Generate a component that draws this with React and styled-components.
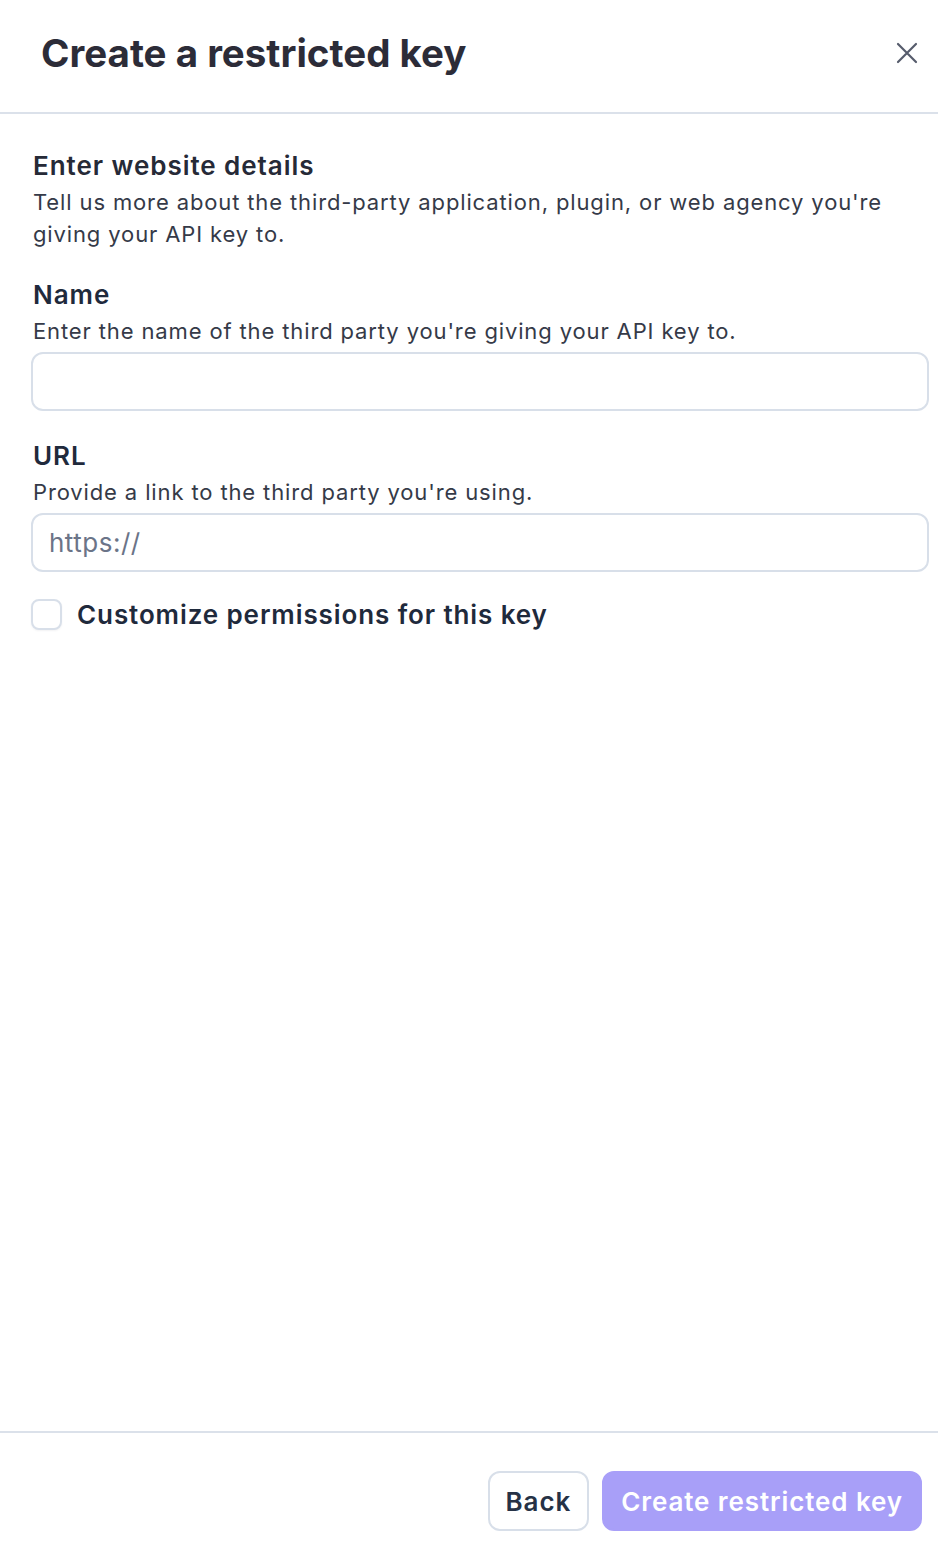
import React from "react";
import styled, { createGlobalStyle } from "styled-components";

const GlobalStyle = createGlobalStyle`
    html, body {
        margin: 0;
        padding: 0;
        background: #ffffff;
    }
    body {
        font-family: Inter, "Noto Sans", "Liberation Sans", sans-serif;
        -webkit-font-smoothing: antialiased;
    }
    * {
        box-sizing: border-box;
    }
`

const Page = styled.div`
    display: flex;
    flex-direction: column;
    width: 938px;
    height: 1552px;
    background: #ffffff;
`

const Header = styled.header`
    display: flex;
    align-items: center;
    justify-content: space-between;
    height: 114px;
    padding: 0 18px 6px 41px;
    border-bottom: 2px solid #dbe1ea;
`

const Title = styled.h1`
    margin: 0;
    font-size: 38.5px;
    font-weight: 700;
    color: #2c2c38;
`

const CloseButton = styled.button`
    display: flex;
    align-items: center;
    justify-content: center;
    width: 26px;
    height: 26px;
    padding: 0;
    border: none;
    background: none;
    color: #565c6c;
    cursor: pointer;
`

const Body = styled.main`
    flex: 1;
    display: flex;
    flex-direction: column;
    padding: 36px 9px 0 31px;
`

const Section = styled.div`
    display: flex;
    flex-direction: column;
    margin-bottom: ${(props) => props.gap || "0px"};
`

const SectionTitle = styled.h2`
    margin: 0 0 0 2px;
    font-size: 26px;
    line-height: 32px;
    font-weight: 600;
    letter-spacing: 0.95px;
    color: #262a37;
`

const Label = styled.label`
    margin: 0 0 0 2px;
    font-size: 26px;
    line-height: 32px;
    font-weight: 600;
    letter-spacing: 0.95px;
    color: #1f2a3c;
`

const Hint = styled.p`
    margin: 4px 0 0 2px;
    font-size: 22px;
    line-height: 32px;
    font-weight: 400;
    letter-spacing: 0.87px;
    color: #353a48;
`

const Input = styled.input`
    width: 100%;
    height: 59px;
    margin-top: 5px;
    padding: 0 16px;
    border: 2px solid #d8dfe9;
    border-radius: 12px;
    font-family: inherit;
    font-size: 26px;
    letter-spacing: 0.5px;
    color: #1f2a3c;
    outline: none;
    background: #ffffff;

    &::placeholder {
        color: #6b7488;
    }
`

const CheckRow = styled.label`
    display: flex;
    align-items: center;
    gap: 15px;
    cursor: pointer;
`

const Box = styled.span`
    width: 31px;
    height: 31px;
    border: 2px solid #d8dfe9;
    border-radius: 8px;
    background: #ffffff;
    box-shadow: 0 1px 2px rgba(30, 42, 60, 0.06);
`

const CheckText = styled.span`
    font-size: 26px;
    font-weight: 600;
    letter-spacing: 0.9px;
    color: #1f2a3c;
`

const Footer = styled.footer`
    display: flex;
    justify-content: flex-end;
    gap: 13px;
    padding: 38px 16px 21px;
    border-top: 2px solid #dbe1ea;
`

const Button = styled.button`
    height: 60px;
    padding: 0 ${(props) => (props.primary ? "17px" : "16px")};
    border-radius: 12px;
    font-family: inherit;
    font-size: 26px;
    font-weight: 600;
    letter-spacing: 0.9px;
    cursor: pointer;
    border: 2px solid ${(props) => (props.primary ? "#a89ff8" : "#d8dfe9")};
    background: ${(props) => (props.primary ? "#a89ff8" : "#ffffff")};
    color: ${(props) => (props.primary ? "#ffffff" : "#263246")};
`

const CloseIcon = () => (
    <svg width="24" height="24" viewBox="0 0 24 24" fill="none" stroke="currentColor" strokeWidth="2.2" strokeLinecap="round">
        <path d="M3 3L21 21M21 3L3 21" />
    </svg>
);

const App = () => {
    return (
        <Page>
            <GlobalStyle />
            <Header>
                <Title>Create a restricted key</Title>
                <CloseButton aria-label="Close">
                    <CloseIcon />
                </CloseButton>
            </Header>
            <Body>
                <Section gap="29px">
                    <SectionTitle>Enter website details</SectionTitle>
                    <Hint>Tell us more about the third-party application, plugin, or web agency you're giving your API key to.</Hint>
                </Section>
                <Section gap="29px">
                    <Label>Name</Label>
                    <Hint>Enter the name of the third party you're giving your API key to.</Hint>
                    <Input type="text" />
                </Section>
                <Section gap="27px">
                    <Label>URL</Label>
                    <Hint>Provide a link to the third party you're using.</Hint>
                    <Input type="text" placeholder="https://" />
                </Section>
                <CheckRow>
                    <Box />
                    <CheckText>Customize permissions for this key</CheckText>
                </CheckRow>
            </Body>
            <Footer>
                <Button>Back</Button>
                <Button primary>Create restricted key</Button>
            </Footer>
        </Page>
    );
};

export default App;
